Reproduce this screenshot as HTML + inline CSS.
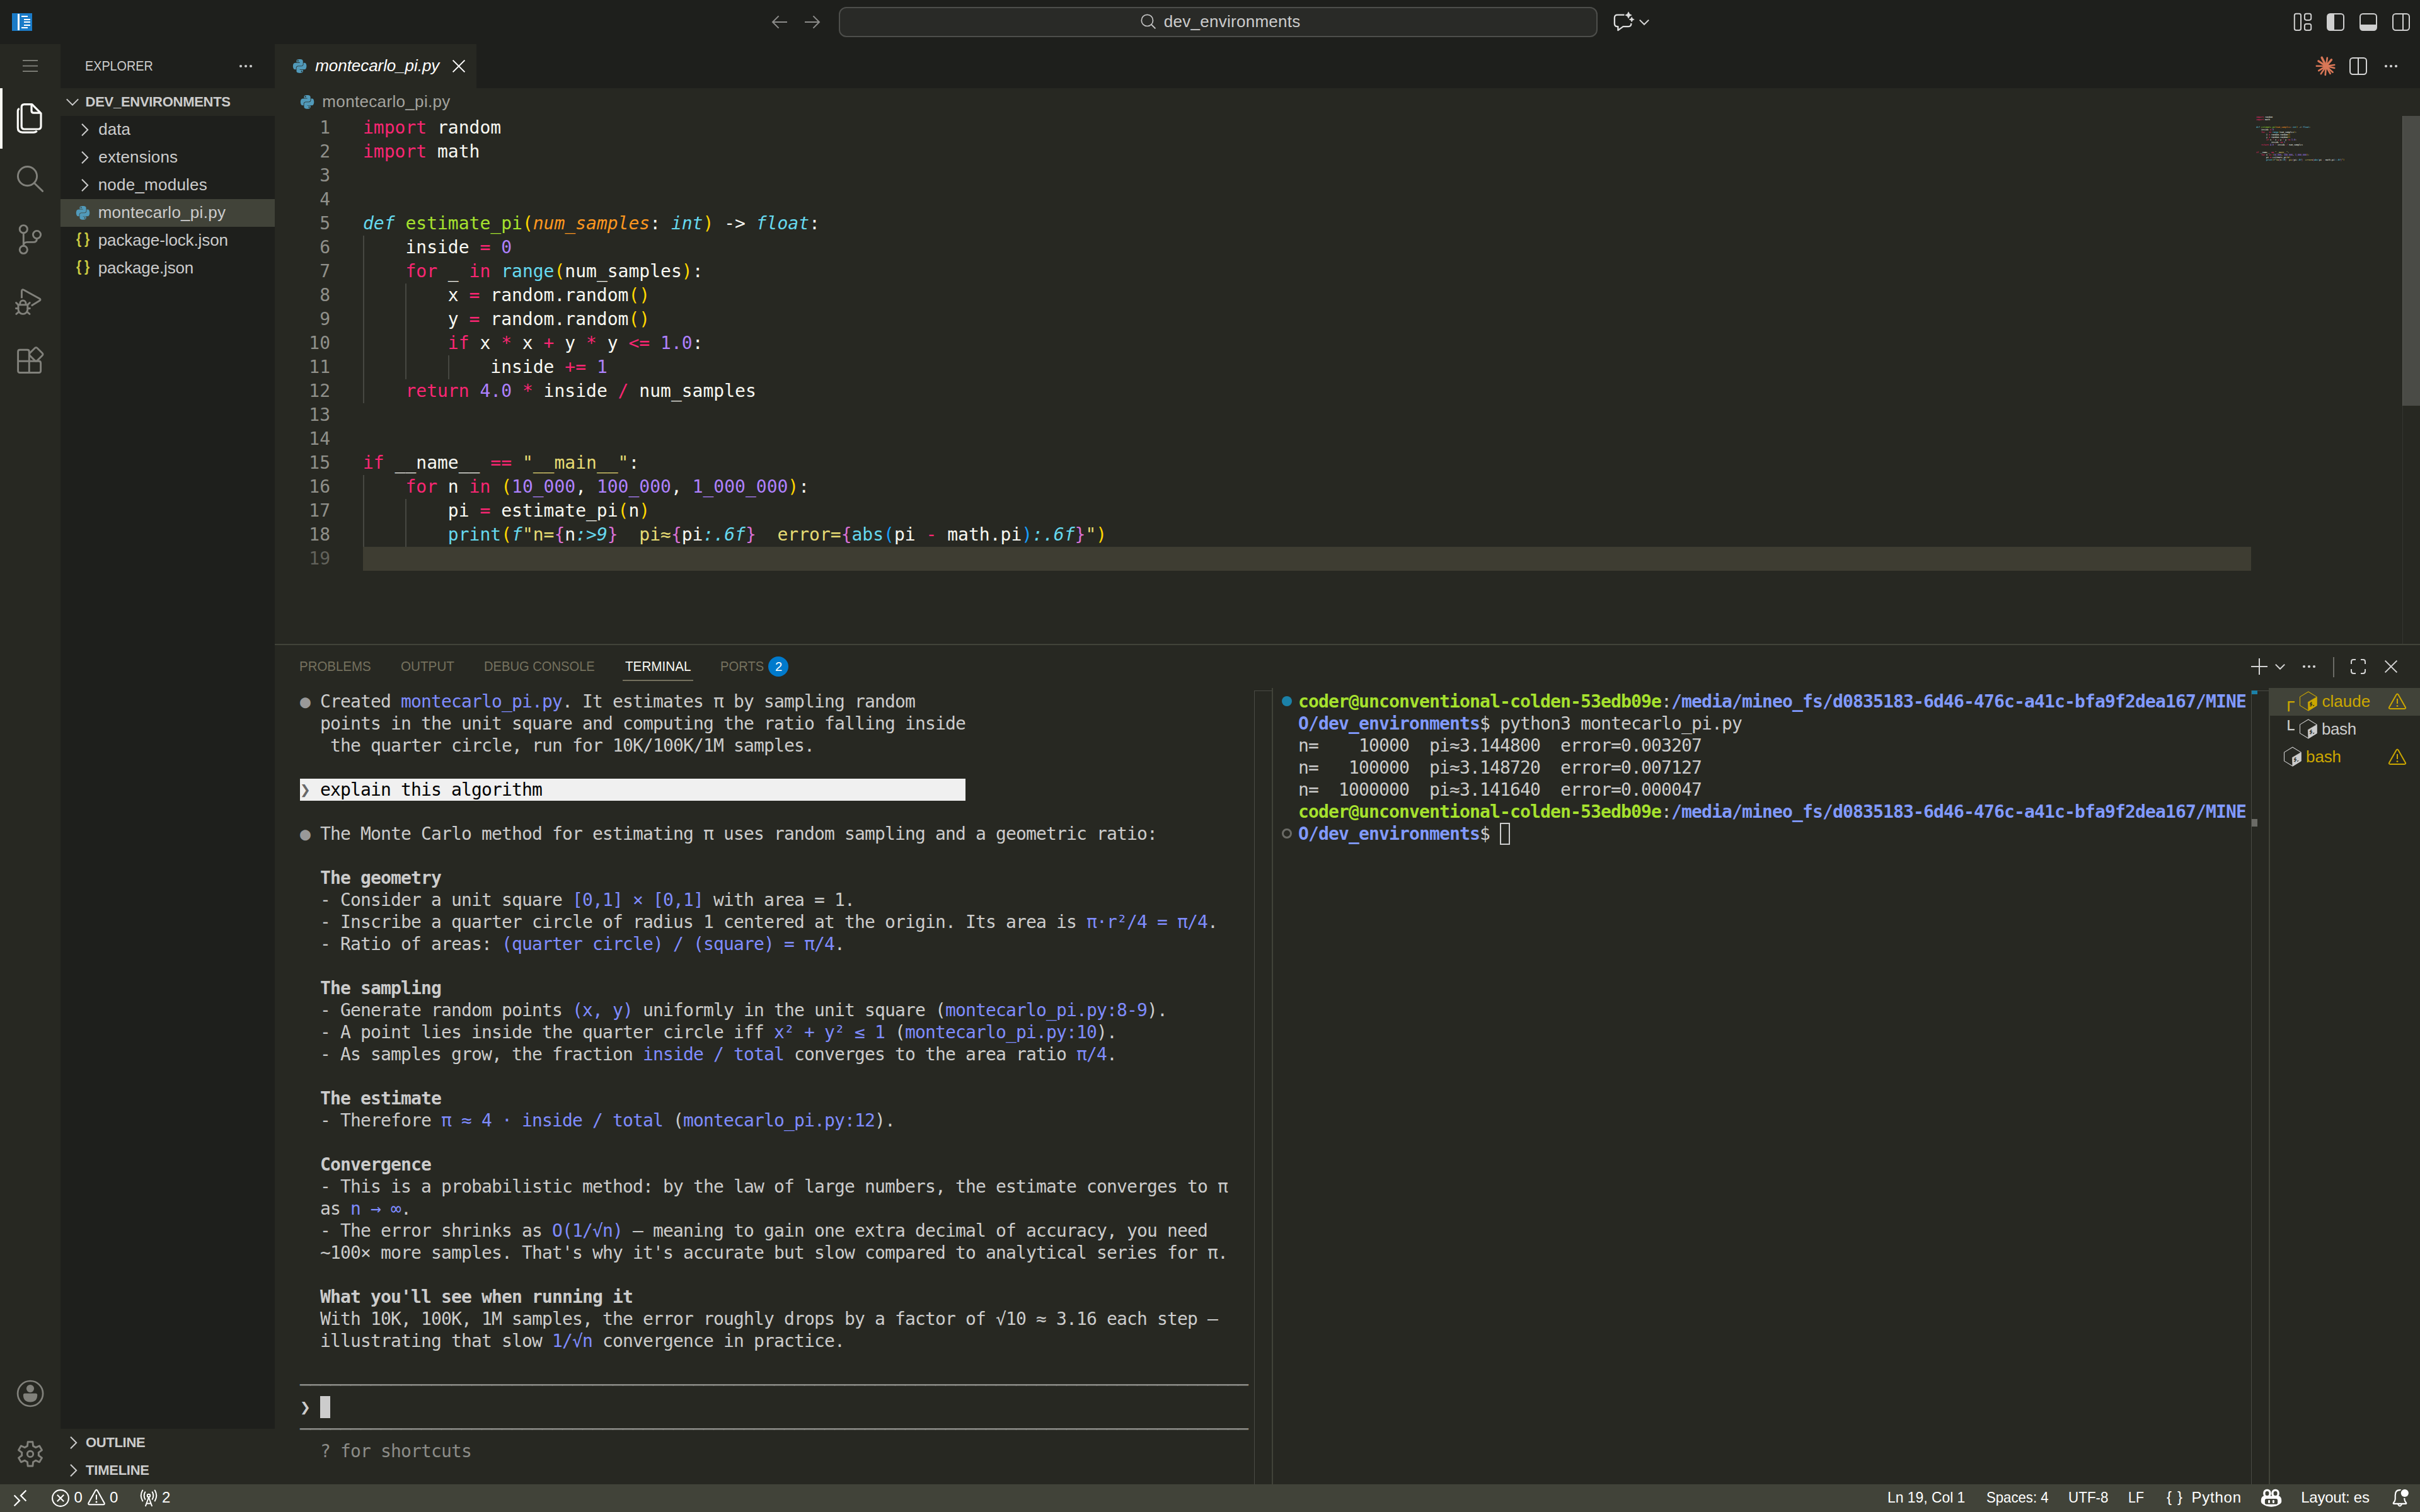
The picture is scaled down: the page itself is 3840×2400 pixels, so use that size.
<!DOCTYPE html>
<html lang="en">
<head>
<meta charset="utf-8">
<title>montecarlo_pi.py - dev_environments - Visual Studio Code</title>
<style>
*{box-sizing:border-box;margin:0;padding:0}
html,body{width:3840px;height:2400px;overflow:hidden;background:#272822}
body{position:relative;font-family:"Liberation Sans", "DejaVu Sans", sans-serif;font-size:26px;color:#cccccc}
.abs{position:absolute}
svg{display:block;overflow:visible}
.t{position:absolute;white-space:pre}
#title{left:0;top:0;width:3840px;height:70px;background:#1e1f1c}
#act{left:0;top:70px;width:96px;height:2286px;background:#272822}
#side{left:96px;top:70px;width:340px;height:2286px;background:#1e1f1c}
.sec{position:absolute;left:96px;width:340px;height:44px;background:#272822}
#tabs{left:436px;top:70px;width:3404px;height:70px;background:#1e1f1c}
#tab{left:436px;top:70px;width:320px;height:70px;background:#272822}
#crumbs{left:436px;top:140px;width:3404px;height:44px;background:#272822}
#editor{left:436px;top:184px;width:3404px;height:838px;background:#272822;overflow:hidden}
#panel{left:436px;top:1022px;width:3404px;height:1334px;background:#272822;border-top:2px solid #414339}
#status{left:0;top:2356px;width:3840px;height:44px;background:#414339}
/* code */
.code{font-family:"DejaVu Sans Mono", "Liberation Mono", monospace;font-size:28px;line-height:38px;color:#f8f8f2}
.cl{height:38px;white-space:pre}
.ln{height:38px;text-align:right;color:#90908a;white-space:pre}
.ln.lncur{color:#62625b}
.k{color:#f92672}.w{color:#f8f8f2}.c{color:#66d9ef}.ci{color:#66d9ef;font-style:italic}
.g{color:#a6e22e}.oi{color:#fd971f;font-style:italic}.p{color:#ae81ff}.s{color:#e6db74}
.b1{color:#ffd700}.b2{color:#da70d6}.b3{color:#179fff}
.ig{position:absolute;width:2px;background:#464741}
/* terminal */
.term{position:absolute;font-family:"DejaVu Sans Mono", "Liberation Mono", monospace;font-size:28px;line-height:35px;letter-spacing:-0.857px;color:#cccccc}
.tr{height:35px;white-space:pre}
.l{color:#7f8cff}.bd{font-weight:bold}.dim{color:#8c8c88}
.dot{color:#999999}
.inv{background:#f0f0f0;color:#000;display:inline-block;height:35px}
.pg{color:#686868}
.pg2{color:#cccccc}
.cur{display:inline-block;width:16px;height:35px;background:#cccccc;vertical-align:top}
.hcur{display:inline-block;width:16px;height:35px;border:2px solid #cccccc;vertical-align:top}
.tg{color:#a6e22e;font-weight:bold}.tb{color:#819aff;font-weight:bold}
.hr{position:absolute;height:2px;background:#8c8c88}
</style>
</head>
<body>

<div id="title" class="abs">
  <div class="abs" style="left:19px;top:21px;width:32px;height:28px;background:#1a7bc8">
    <div class="abs" style="left:9px;top:1px;width:3px;height:26px;background:#fff"></div>
    <div class="abs" style="left:15px;top:4px;width:10px;height:2px;background:#fff"></div>
    <div class="abs" style="left:19px;top:9px;width:10px;height:2px;background:#fff"></div>
    <div class="abs" style="left:19px;top:13px;width:10px;height:2px;background:#fff"></div>
    <div class="abs" style="left:19px;top:18px;width:10px;height:2px;background:#fff"></div>
    <div class="abs" style="left:15px;top:22px;width:10px;height:2px;background:#fff"></div>
  </div>
</div>
<div id="act" class="abs"></div>
<div id="side" class="abs"></div>
<div class="sec" style="top:140px"></div>
<div class="sec" style="top:316px;background:#414339"></div>
<div class="sec" style="top:2268px"></div>
<div class="sec" style="top:2312px"></div>
<div id="tabs" class="abs"></div>
<div id="tab" class="abs"></div>
<div id="crumbs" class="abs"></div>

<!-- ===== editor ===== -->
<div id="editor" class="abs">
  <div class="abs" style="left:140px;top:684px;width:2996px;height:38px;background:#3e3d32"></div>
  <div class="abs code" style="left:0;top:0;width:88px"><div class="ln">1</div>
<div class="ln">2</div>
<div class="ln">3</div>
<div class="ln">4</div>
<div class="ln">5</div>
<div class="ln">6</div>
<div class="ln">7</div>
<div class="ln">8</div>
<div class="ln">9</div>
<div class="ln">10</div>
<div class="ln">11</div>
<div class="ln">12</div>
<div class="ln">13</div>
<div class="ln">14</div>
<div class="ln">15</div>
<div class="ln">16</div>
<div class="ln">17</div>
<div class="ln">18</div>
<div class="ln lncur">19</div></div>
  <div class="abs" style="left:140px;top:0"><div class="ig" style="left:0.0px;top:190px;height:266px"></div><div class="ig" style="left:67.4px;top:266px;height:152px"></div><div class="ig" style="left:134.9px;top:380px;height:38px"></div><div class="ig" style="left:0.0px;top:570px;height:114px"></div><div class="ig" style="left:67.4px;top:608px;height:76px"></div></div>
  <div class="abs code" style="left:140px;top:0">
<div class="cl"><span class="k">import</span><span class="w"> random</span></div>
<div class="cl"><span class="k">import</span><span class="w"> math</span></div>
<div class="cl"></div>
<div class="cl"></div>
<div class="cl"><span class="ci">def</span><span class="w"> </span><span class="g">estimate_pi</span><span class="b1">(</span><span class="oi">num_samples</span><span class="w">: </span><span class="ci">int</span><span class="b1">)</span><span class="w"> -&gt; </span><span class="ci">float</span><span class="w">:</span></div>
<div class="cl"><span class="w">    inside </span><span class="k">=</span><span class="w"> </span><span class="p">0</span></div>
<div class="cl"><span class="w">    </span><span class="k">for</span><span class="w"> _ </span><span class="k">in</span><span class="w"> </span><span class="c">range</span><span class="b1">(</span><span class="w">num_samples</span><span class="b1">)</span><span class="w">:</span></div>
<div class="cl"><span class="w">        x </span><span class="k">=</span><span class="w"> random.random</span><span class="b1">()</span></div>
<div class="cl"><span class="w">        y </span><span class="k">=</span><span class="w"> random.random</span><span class="b1">()</span></div>
<div class="cl"><span class="w">        </span><span class="k">if</span><span class="w"> x </span><span class="k">*</span><span class="w"> x </span><span class="k">+</span><span class="w"> y </span><span class="k">*</span><span class="w"> y </span><span class="k">&lt;=</span><span class="w"> </span><span class="p">1.0</span><span class="w">:</span></div>
<div class="cl"><span class="w">            inside </span><span class="k">+=</span><span class="w"> </span><span class="p">1</span></div>
<div class="cl"><span class="w">    </span><span class="k">return</span><span class="w"> </span><span class="p">4.0</span><span class="w"> </span><span class="k">*</span><span class="w"> inside </span><span class="k">/</span><span class="w"> num_samples</span></div>
<div class="cl"></div>
<div class="cl"></div>
<div class="cl"><span class="k">if</span><span class="w"> __name__ </span><span class="k">==</span><span class="w"> </span><span class="s">"__main__"</span><span class="w">:</span></div>
<div class="cl"><span class="w">    </span><span class="k">for</span><span class="w"> n </span><span class="k">in</span><span class="w"> </span><span class="b1">(</span><span class="p">10_000</span><span class="w">, </span><span class="p">100_000</span><span class="w">, </span><span class="p">1_000_000</span><span class="b1">)</span><span class="w">:</span></div>
<div class="cl"><span class="w">        pi </span><span class="k">=</span><span class="w"> estimate_pi</span><span class="b1">(</span><span class="w">n</span><span class="b1">)</span></div>
<div class="cl"><span class="w">        </span><span class="c">print</span><span class="b1">(</span><span class="ci">f</span><span class="s">"n=</span><span class="b2">{</span><span class="w">n</span><span class="ci">:&gt;9</span><span class="b2">}</span><span class="s">  pi≈</span><span class="b2">{</span><span class="w">pi</span><span class="ci">:.6f</span><span class="b2">}</span><span class="s">  error=</span><span class="b2">{</span><span class="c">abs</span><span class="b3">(</span><span class="w">pi </span><span class="k">-</span><span class="w"> math.pi</span><span class="b3">)</span><span class="ci">:.6f</span><span class="b2">}</span><span class="s">"</span><span class="b1">)</span></div>
<div class="cl"></div>
  </div>
  <div class="abs code" style="left:3144px;top:0;transform-origin:0 0;transform:scale(0.1186,0.10526)">
<div class="cl"><span class="k">import</span><span class="w"> random</span></div>
<div class="cl"><span class="k">import</span><span class="w"> math</span></div>
<div class="cl"></div>
<div class="cl"></div>
<div class="cl"><span class="ci">def</span><span class="w"> </span><span class="g">estimate_pi</span><span class="b1">(</span><span class="oi">num_samples</span><span class="w">: </span><span class="ci">int</span><span class="b1">)</span><span class="w"> -&gt; </span><span class="ci">float</span><span class="w">:</span></div>
<div class="cl"><span class="w">    inside </span><span class="k">=</span><span class="w"> </span><span class="p">0</span></div>
<div class="cl"><span class="w">    </span><span class="k">for</span><span class="w"> _ </span><span class="k">in</span><span class="w"> </span><span class="c">range</span><span class="b1">(</span><span class="w">num_samples</span><span class="b1">)</span><span class="w">:</span></div>
<div class="cl"><span class="w">        x </span><span class="k">=</span><span class="w"> random.random</span><span class="b1">()</span></div>
<div class="cl"><span class="w">        y </span><span class="k">=</span><span class="w"> random.random</span><span class="b1">()</span></div>
<div class="cl"><span class="w">        </span><span class="k">if</span><span class="w"> x </span><span class="k">*</span><span class="w"> x </span><span class="k">+</span><span class="w"> y </span><span class="k">*</span><span class="w"> y </span><span class="k">&lt;=</span><span class="w"> </span><span class="p">1.0</span><span class="w">:</span></div>
<div class="cl"><span class="w">            inside </span><span class="k">+=</span><span class="w"> </span><span class="p">1</span></div>
<div class="cl"><span class="w">    </span><span class="k">return</span><span class="w"> </span><span class="p">4.0</span><span class="w"> </span><span class="k">*</span><span class="w"> inside </span><span class="k">/</span><span class="w"> num_samples</span></div>
<div class="cl"></div>
<div class="cl"></div>
<div class="cl"><span class="k">if</span><span class="w"> __name__ </span><span class="k">==</span><span class="w"> </span><span class="s">"__main__"</span><span class="w">:</span></div>
<div class="cl"><span class="w">    </span><span class="k">for</span><span class="w"> n </span><span class="k">in</span><span class="w"> </span><span class="b1">(</span><span class="p">10_000</span><span class="w">, </span><span class="p">100_000</span><span class="w">, </span><span class="p">1_000_000</span><span class="b1">)</span><span class="w">:</span></div>
<div class="cl"><span class="w">        pi </span><span class="k">=</span><span class="w"> estimate_pi</span><span class="b1">(</span><span class="w">n</span><span class="b1">)</span></div>
<div class="cl"><span class="w">        </span><span class="c">print</span><span class="b1">(</span><span class="ci">f</span><span class="s">"n=</span><span class="b2">{</span><span class="w">n</span><span class="ci">:&gt;9</span><span class="b2">}</span><span class="s">  pi≈</span><span class="b2">{</span><span class="w">pi</span><span class="ci">:.6f</span><span class="b2">}</span><span class="s">  error=</span><span class="b2">{</span><span class="c">abs</span><span class="b3">(</span><span class="w">pi </span><span class="k">-</span><span class="w"> math.pi</span><span class="b3">)</span><span class="ci">:.6f</span><span class="b2">}</span><span class="s">"</span><span class="b1">)</span></div>
<div class="cl"></div>
  </div>
  <div class="abs" style="left:3376px;top:0;width:1px;height:838px;background:#353631"></div>
  <div class="abs" style="left:3376px;top:0;width:28px;height:460px;background:#4a4b46;border-left:1px solid #595a55"></div>
</div>

<!-- ===== panel ===== -->
<div id="panel" class="abs">
  <div class="term" style="left:40px;top:72px">
<div class="tr"><span class="dot">●</span><span class="d"> Created </span><span class="l">montecarlo_pi.py</span><span class="d">. It estimates π by sampling random</span></div>
<div class="tr"><span class="d">  points in the unit square and computing the ratio falling inside</span></div>
<div class="tr"><span class="d">   the quarter circle, run for 10K/100K/1M samples.</span></div>
<div class="tr"></div>
<div class="tr"><span class="inv"><span class="pg">❯</span> explain this algorithm                                          </span></div>
<div class="tr"></div>
<div class="tr"><span class="dot">●</span><span class="d"> The Monte Carlo method for estimating π uses random sampling and a geometric ratio:</span></div>
<div class="tr"></div>
<div class="tr"><span class="bd">  The geometry</span></div>
<div class="tr"><span class="d">  - Consider a unit square </span><span class="l">[0,1] × [0,1]</span><span class="d"> with area = 1.</span></div>
<div class="tr"><span class="d">  - Inscribe a quarter circle of radius 1 centered at the origin. Its area is </span><span class="l">π·r²/4 = π/4</span><span class="d">.</span></div>
<div class="tr"><span class="d">  - Ratio of areas: </span><span class="l">(quarter circle) / (square) = π/4</span><span class="d">.</span></div>
<div class="tr"></div>
<div class="tr"><span class="bd">  The sampling</span></div>
<div class="tr"><span class="d">  - Generate random points </span><span class="l">(x, y)</span><span class="d"> uniformly in the unit square (</span><span class="l">montecarlo_pi.py:8-9</span><span class="d">).</span></div>
<div class="tr"><span class="d">  - A point lies inside the quarter circle iff </span><span class="l">x² + y² ≤ 1</span><span class="d"> (</span><span class="l">montecarlo_pi.py:10</span><span class="d">).</span></div>
<div class="tr"><span class="d">  - As samples grow, the fraction </span><span class="l">inside / total</span><span class="d"> converges to the area ratio </span><span class="l">π/4</span><span class="d">.</span></div>
<div class="tr"></div>
<div class="tr"><span class="bd">  The estimate</span></div>
<div class="tr"><span class="d">  - Therefore </span><span class="l">π ≈ 4 · inside / total</span><span class="d"> (</span><span class="l">montecarlo_pi.py:12</span><span class="d">).</span></div>
<div class="tr"></div>
<div class="tr"><span class="bd">  Convergence</span></div>
<div class="tr"><span class="d">  - This is a probabilistic method: by the law of large numbers, the estimate converges to π</span></div>
<div class="tr"><span class="d">  as </span><span class="l">n → ∞</span><span class="d">.</span></div>
<div class="tr"><span class="d">  - The error shrinks as </span><span class="l">O(1/√n)</span><span class="d"> — meaning to gain one extra decimal of accuracy, you need</span></div>
<div class="tr"><span class="d">  ~100× more samples. That's why it's accurate but slow compared to analytical series for π.</span></div>
<div class="tr"></div>
<div class="tr"><span class="bd">  What you'll see when running it</span></div>
<div class="tr"><span class="d">  With 10K, 100K, 1M samples, the error roughly drops by a factor of √10 ≈ 3.16 each step —</span></div>
<div class="tr"><span class="d">  illustrating that slow </span><span class="l">1/√n</span><span class="d"> convergence in practice.</span></div>
<div class="tr"></div>
<div class="tr"><span class="dim">──────────────────────────────────────────────────────────────────────────────────────────────</span></div>
<div class="tr"><span class="pg2">❯</span><span class="d"> </span><span class="cur">&nbsp;</span></div>
<div class="tr"><span class="dim">──────────────────────────────────────────────────────────────────────────────────────────────</span></div>
<div class="tr"><span class="dim">  ? for shortcuts</span></div>
<div class="tr"></div>
  </div>
  <div class="abs" style="left:1554px;top:72px;width:28px;height:1262px;border-left:1px solid #4a4b45;border-top:1px solid #4a4b45"></div>
  <div class="abs" style="left:1582px;top:68px;width:2px;height:1266px;background:#414339"></div>
  <div class="abs" style="left:1598px;top:81px;width:16px;height:16px;border-radius:8px;background:#1b81a8"></div>
  <div class="abs" style="left:1598px;top:291px;width:16px;height:16px;border-radius:8px;border:3px solid #6b6b66"></div>
  <div class="term" style="left:1624px;top:72px">
<div class="tr"><span class="tg">coder@unconventional-colden-53edb09e</span><span class="d">:</span><span class="tb">/media/mineo_fs/d0835183-6d46-476c-a41c-bfa9f2dea167/MINE</span></div>
<div class="tr"><span class="tb">O/dev_environments</span><span class="d">$ python3 montecarlo_pi.py</span></div>
<div class="tr"><span class="d">n=    10000  pi≈3.144800  error=0.003207</span></div>
<div class="tr"><span class="d">n=   100000  pi≈3.148720  error=0.007127</span></div>
<div class="tr"><span class="d">n=  1000000  pi≈3.141640  error=0.000047</span></div>
<div class="tr"><span class="tg">coder@unconventional-colden-53edb09e</span><span class="d">:</span><span class="tb">/media/mineo_fs/d0835183-6d46-476c-a41c-bfa9f2dea167/MINE</span></div>
<div class="tr"><span class="tb">O/dev_environments</span><span class="d">$ </span><span class="hcur">&nbsp;</span></div>
<div class="tr"></div>
  </div>
  <div class="abs" style="left:3136px;top:72px;width:28px;height:1262px;border-left:1px solid #4a4b45;border-top:1px solid #4a4b45"></div>
  <div class="abs" style="left:3137px;top:72px;width:9px;height:6px;background:#1b81a8"></div>
  <div class="abs" style="left:3137px;top:276px;width:9px;height:12px;background:#6b6b66"></div>
</div>

<div id="status" class="abs"></div>

<!-- ===== overlay: labels + icons (page coordinates) ===== -->
<div class="abs" style="left:1220.5px;top:19px"><svg width="32" height="32" viewBox="0 0 16 16" style="" fill="none"><path d="M14 8 H2.500 M7.300 3.200 L2.500 8 L7.300 12.800" stroke="#8c8c8a" stroke-width="1"/></svg></div>
<div class="abs" style="left:1272.8px;top:19px"><svg width="32" height="32" viewBox="0 0 16 16" style="" fill="none"><path d="M2 8 H13.500 M8.700 3.200 L13.500 8 L8.700 12.800" stroke="#8c8c8a" stroke-width="1"/></svg></div>
<div class="abs" style="left:1331px;top:11px;width:1204px;height:48px;border:2px solid #4d4e4b;border-radius:12px;background:#292a27"></div>
<div class="abs" style="left:1809px;top:21px"><svg width="28" height="28" viewBox="0 0 28 28" style="" fill="none"><circle cx="11.400" cy="11.400" r="9.100" stroke="#c4c4c4" stroke-width="1.700"/><path d="M18 18 L24.400 24.400" stroke="#c4c4c4" stroke-width="1.900"/></svg></div>
<div class="t" style="left:1846.83px;top:19px;font-size:26px;line-height:30px;color:#cccccc;letter-spacing:0.267px;">dev_environments</div>
<div class="abs" style="left:2556px;top:16px"><svg width="40" height="36" viewBox="0 0 40 36" style="" fill="none"><path d="M21.500 7.600 H10.500 Q5.900 7.600 5.900 12.200 V21.500 Q5.900 26.100 10.500 26.100 H11.400 V32.200 L19.600 26.100 H28 Q32.300 26.100 32.300 21.800 V21" stroke="#dedede" stroke-width="2.300" stroke-linejoin="round"/><path d="M28 2.800 L29.700 6.300 L33.200 8 L29.700 9.700 L28 13.200 L26.300 9.700 L22.800 8 L26.300 6.300 Z" fill="#dedede" stroke="#dedede" stroke-width=".6" stroke-linejoin="round"/><path d="M33.200 10.800 L34.500 13.600 L37.300 14.900 L34.500 16.200 L33.200 19 L31.900 16.200 L29.100 14.900 L31.900 13.600 Z" fill="#dedede" stroke="#dedede" stroke-width=".5" stroke-linejoin="round"/></svg></div>
<div class="abs" style="left:2593px;top:19px"><svg width="32" height="32" viewBox="0 0 16 16" style="" fill="none"><path d="M4.400 6.300 L8 9.900 L11.600 6.300" stroke="#d8d8d8" stroke-width="1"/></svg></div>
<div class="abs" style="left:3638px;top:19px"><svg width="32" height="32" viewBox="0 0 16 16" style="" fill="none"><rect x="1.400" y="1.400" width="5.100" height="13.150" rx="1.400" stroke="#cfcfcf"/><rect x="9.450" y="1.400" width="5.150" height="5.050" rx="1.400" stroke="#cfcfcf"/><rect x="9.450" y="9.450" width="5.150" height="5.100" rx="1.400" stroke="#cfcfcf"/></svg></div>
<div class="abs" style="left:3690px;top:19px"><svg width="32" height="32" viewBox="0 0 16 16" style="" fill="none"><rect x="1.500" y="1.500" width="13" height="13" rx="2.200" stroke="#cfcfcf"/><path d="M1.500 3.700 Q1.500 1.500 3.700 1.500 H7 V14.500 H3.700 Q1.500 14.500 1.500 12.300 Z" fill="#cfcfcf"/></svg></div>
<div class="abs" style="left:3742px;top:19px"><svg width="32" height="32" viewBox="0 0 16 16" style="" fill="none"><rect x="1.500" y="1.500" width="13" height="13" rx="2.200" stroke="#cfcfcf"/><path d="M1.500 10 H14.500 V12.300 Q14.500 14.500 12.300 14.500 H3.700 Q1.500 14.500 1.500 12.300 Z" fill="#cfcfcf"/></svg></div>
<div class="abs" style="left:3794px;top:19px"><svg width="32" height="32" viewBox="0 0 16 16" style="" fill="none"><rect x="1.500" y="1.500" width="13" height="13" rx="2.200" stroke="#cfcfcf"/><path d="M9.500 1.500 V14.500" stroke="#cfcfcf"/></svg></div>
<div class="abs" style="left:32px;top:89px"><svg width="32" height="32" viewBox="0 0 16 16" style="" fill="none"><path d="M2 3.600 H14 M2 7.850 H14 M2 12.100 H14" stroke="#85857f" stroke-width=".9"/></svg></div>
<div class="abs" style="left:0;top:140px;width:4px;height:96px;background:#f8f8f2"></div>
<div class="abs" style="left:24px;top:164px"><svg width="48" height="48" viewBox="0 0 24 24" style="" fill="none"><path d="M7.300 0.800 H13.400 L20.500 7.900 V18.300 Q20.500 20.500 18.300 20.500 H7.300 Q5.100 20.500 5.100 18.300 V3 Q5.100 0.800 7.300 0.800 Z" stroke="#fbfbf8" stroke-width="1.6" stroke-linejoin="round"/><path d="M13 0.900 V5.900 Q13 7.600 14.700 7.600 H20.300" stroke="#fbfbf8" stroke-width="1.6"/><path d="M3.400 4.250 Q2.150 4.700 2.150 6.100 V19.400 Q2.150 23.050 5.800 23.050 H14.600 Q16.400 23.050 17.300 21.900" stroke="#fbfbf8" stroke-width="1.6" stroke-linecap="butt"/></svg></div>
<div class="abs" style="left:24px;top:260px"><svg width="48" height="48" viewBox="0 0 24 24" style="" fill="none"><circle cx="9.750" cy="9.800" r="7.550" stroke="#81817b" stroke-width="1.45"/><path d="M15.150 15.250 L21.800 21.700" stroke="#81817b" stroke-width="1.45" stroke-linecap="round"/></svg></div>
<div class="abs" style="left:24px;top:356px"><svg width="48" height="48" viewBox="0 0 24 24" style="" fill="none"><circle cx="6.650" cy="3.850" r="3.050" stroke="#81817b" stroke-width="1.45"/><circle cx="6.650" cy="20.150" r="3.050" stroke="#81817b" stroke-width="1.45"/><circle cx="17.250" cy="8.250" r="3.050" stroke="#81817b" stroke-width="1.45"/><path d="M6.650 6.900 V17.100 M17.250 11.300 V11.500 Q17.250 14.200 14.450 14.200 H9.600 Q6.650 14.200 6.650 17.100" stroke="#81817b" stroke-width="1.45"/></svg></div>
<div class="abs" style="left:24px;top:452px"><svg width="48" height="48" viewBox="0 0 24 24" style="" fill="none"><path d="M5.230 10.660 V5.200 Q5.230 3.300 6.900 4.150 L19.400 11.050 Q20.650 11.820 19.400 12.600 L12.900 16.600" stroke="#81817b" stroke-width="1.45" stroke-linecap="butt" stroke-linejoin="round"/><path d="M2.500 15.950 H9.900 V19.500 A3.700 3.700 0 0 1 2.500 19.500 Z" stroke="#81817b" stroke-width="1.45" stroke-linejoin="round"/><path d="M3.900 15.950 V14.800 A2.300 2.300 0 0 1 8.500 14.800 V15.950" stroke="#81817b" stroke-width="1.45"/><path d="M2.500 18.770 H0.700 M9.900 18.770 H11.700 M2.300 15.700 L0.800 14.300 M10.100 15.700 L11.600 14.300 M2.900 21.600 L0.900 23.200 M9.500 21.600 L11.500 23.200" stroke="#81817b" stroke-width="1.45" stroke-linecap="round"/></svg></div>
<div class="abs" style="left:24px;top:548px"><svg width="48" height="48" viewBox="0 0 24 24" style="" fill="none"><path d="M11.150 12.600 V5.100 Q11.150 3.600 9.650 3.600 H3.800 Q2.300 3.600 2.300 5.100 V20.250 Q2.300 21.750 3.800 21.750 H18.800 Q20.300 21.750 20.300 20.250 V14.100 Q20.300 12.600 18.800 12.600 H2.300 M11.150 12.600 V21.750" stroke="#81817b" stroke-width="1.45" stroke-linejoin="round"/><path d="M15.550 2.350 Q16.600 1.300 17.650 2.350 L21.450 6.150 Q22.500 7.200 21.450 8.250 L17.650 12.050 Q16.600 13.100 15.550 12.050 L11.750 8.250 Q10.700 7.200 11.750 6.150 Z" stroke="#81817b" stroke-width="1.45" stroke-linejoin="round"/></svg></div>
<div class="abs" style="left:24px;top:2188px"><svg width="48" height="48" viewBox="0 0 24 24" style="" fill="none"><circle cx="12.050" cy="12" r="10" stroke="#81817b" stroke-width="1.350"/><circle cx="12" cy="8.050" r="3.050" fill="#81817b"/><path d="M6.450 13.100 Q6.450 11.850 7.700 11.850 H16.350 Q17.600 11.850 17.600 13.100 Q17.600 18.700 12 18.700 Q6.450 18.700 6.450 13.100 Z" fill="#81817b"/></svg></div>
<div class="abs" style="left:24px;top:2284px"><svg width="48" height="48" viewBox="0 0 24 24" style="" fill="none"><path d="M14.29 5.65 L13.94 2.40 L10.06 2.40 L9.71 5.65 A6.70 6.70 0 0 0 7.69 6.82 L4.70 5.49 L2.75 8.86 L5.40 10.79 A6.70 6.70 0 0 0 5.40 13.11 L2.75 15.04 L4.70 18.41 L7.69 17.08 A6.70 6.70 0 0 0 9.71 18.25 L10.06 21.50 L13.94 21.50 L14.29 18.25 A6.70 6.70 0 0 0 16.31 17.08 L19.30 18.41 L21.25 15.04 L18.60 13.11 A6.70 6.70 0 0 0 18.60 10.79 L21.25 8.86 L19.30 5.49 L16.31 6.82 A6.70 6.70 0 0 0 14.29 5.65 Z" stroke="#81817b" stroke-width="1.45" stroke-linejoin="round"/><circle cx="12" cy="11.950" r="2.350" stroke="#81817b" stroke-width="1.45"/></svg></div>
<div class="t" style="left:135.38px;top:92px;font-size:22px;line-height:25px;color:#cccccc;transform:scaleX(0.8991);transform-origin:0 0;">EXPLORER</div>
<div class="abs" style="left:373.7px;top:88.9px"><svg width="32" height="32" viewBox="0 0 16 16" style="" fill="none"><circle cx="4" cy="8" r="1.050" fill="#cccccc"/><circle cx="8" cy="8" r="1.050" fill="#cccccc"/><circle cx="12" cy="8" r="1.050" fill="#cccccc"/></svg></div>
<div class="abs" style="left:99.4px;top:145.7px"><svg width="32" height="32" viewBox="0 0 16 16" style="" fill="none"><path d="M3.400 5.700 L8 10.300 L12.600 5.700" stroke="#cccccc" stroke-width="1.0"/></svg></div>
<div class="t" style="left:135.54px;top:149px;font-size:22px;line-height:25px;color:#cccccc;font-weight:bold;letter-spacing:-0.281px;">DEV_ENVIRONMENTS</div>
<div class="abs" style="left:117.8px;top:190px"><svg width="32" height="32" viewBox="0 0 16 16" style="" fill="none"><path d="M6 3.400 L10.600 8 L6 12.600" stroke="#cccccc" stroke-width="1.0"/></svg></div>
<div class="t" style="left:156.33px;top:190px;font-size:26px;line-height:30px;color:#cccccc;letter-spacing:0.046px;">data</div>
<div class="abs" style="left:117.8px;top:234px"><svg width="32" height="32" viewBox="0 0 16 16" style="" fill="none"><path d="M6 3.400 L10.600 8 L6 12.600" stroke="#cccccc" stroke-width="1.0"/></svg></div>
<div class="t" style="left:156.33px;top:234px;font-size:26px;line-height:30px;color:#cccccc;letter-spacing:0.163px;">extensions</div>
<div class="abs" style="left:117.8px;top:278px"><svg width="32" height="32" viewBox="0 0 16 16" style="" fill="none"><path d="M6 3.400 L10.600 8 L6 12.600" stroke="#cccccc" stroke-width="1.0"/></svg></div>
<div class="t" style="left:155.67px;top:278px;font-size:26px;line-height:30px;color:#cccccc;letter-spacing:0.233px;">node_modules</div>
<div class="abs" style="left:120.9px;top:326.9px"><svg width="21.2" height="21.2" viewBox="2 2 28 28" style="" fill="none"><path fill="#519aba" d="M15.9 2c-1.2 0-2.3.1-3.3.3-2.9.5-3.4 1.600-3.400 3.500V8.400h6.800v1H6.600c-2 0-3.700 1.200-4.300 3.500-.600 2.600-.700 4.300 0 7 .500 2 1.600 3.500 3.600 3.500h2.300v-3.200c0-2.300 2-4.300 4.300-4.300h6.800c1.900 0 3.400-1.600 3.400-3.500V5.800c0-1.800-1.600-3.200-3.400-3.500C18.200 2.100 17 2 15.900 2zm-3.700 2.100c.7 0 1.300.6 1.300 1.300s-.6 1.300-1.300 1.300-1.300-.6-1.300-1.300.6-1.300 1.300-1.300z"/><path fill="#519aba" d="M23.700 9.400v3.100c0 2.400-2 4.400-4.300 4.400h-6.800c-1.900 0-3.400 1.600-3.400 3.500v6.500c0 1.800 1.600 2.900 3.400 3.500 2.200.6 4.200.7 6.800 0 1.700-.5 3.400-1.500 3.400-3.500v-2.600H16v-.9h10.200c2 0 2.700-1.400 3.400-3.500.7-2.100.7-4.200 0-7-.5-2-1.400-3.500-3.400-3.500h-2.500zm-3.800 16.500c.7 0 1.300.6 1.300 1.300s-.6 1.300-1.300 1.300-1.300-.6-1.300-1.300.6-1.300 1.300-1.300z"/></svg></div>
<div class="t" style="left:155.67px;top:322px;font-size:26px;line-height:30px;color:#cccccc;letter-spacing:0.285px;">montecarlo_pi.py</div>
<div class="t" style="left:120.57px;top:366.43px;font-size:23px;line-height:26px;color:#cbcb41;font-weight:bold;transform:scale(0.9101,1.0080);transform-origin:0 0;">{</div>
<div class="t" style="left:134.49px;top:366.43px;font-size:23px;line-height:26px;color:#cbcb41;font-weight:bold;transform:scale(0.9051,1.0080);transform-origin:0 0;">}</div>
<div class="t" style="left:155.72px;top:366px;font-size:26px;line-height:30px;color:#cccccc;letter-spacing:-0.119px;">package-lock.json</div>
<div class="t" style="left:120.57px;top:410.43px;font-size:23px;line-height:26px;color:#cbcb41;font-weight:bold;transform:scale(0.9101,1.0080);transform-origin:0 0;">{</div>
<div class="t" style="left:134.49px;top:410.43px;font-size:23px;line-height:26px;color:#cbcb41;font-weight:bold;transform:scale(0.9051,1.0080);transform-origin:0 0;">}</div>
<div class="t" style="left:155.72px;top:410px;font-size:26px;line-height:30px;color:#cccccc;letter-spacing:-0.146px;">package.json</div>
<div class="abs" style="left:99.5px;top:2274px"><svg width="32" height="32" viewBox="0 0 16 16" style="" fill="none"><path d="M6 3.400 L10.600 8 L6 12.600" stroke="#cccccc" stroke-width="1.0"/></svg></div>
<div class="t" style="left:136.10px;top:2277px;font-size:22px;line-height:25px;color:#cccccc;font-weight:bold;letter-spacing:-0.339px;">OUTLINE</div>
<div class="abs" style="left:99.5px;top:2318px"><svg width="32" height="32" viewBox="0 0 16 16" style="" fill="none"><path d="M6 3.400 L10.600 8 L6 12.600" stroke="#cccccc" stroke-width="1.0"/></svg></div>
<div class="t" style="left:136.09px;top:2321px;font-size:22px;line-height:25px;color:#cccccc;font-weight:bold;letter-spacing:-0.246px;">TIMELINE</div>
<div class="abs" style="left:464.7px;top:93.7px"><svg width="21.3" height="21.3" viewBox="2 2 28 28" style="" fill="none"><path fill="#519aba" d="M15.9 2c-1.2 0-2.3.1-3.3.3-2.9.5-3.4 1.600-3.400 3.500V8.400h6.800v1H6.600c-2 0-3.700 1.200-4.300 3.500-.600 2.600-.700 4.300 0 7 .500 2 1.600 3.500 3.600 3.500h2.300v-3.200c0-2.300 2-4.300 4.300-4.300h6.800c1.900 0 3.400-1.600 3.400-3.500V5.800c0-1.800-1.600-3.200-3.400-3.500C18.200 2.100 17 2 15.900 2zm-3.700 2.100c.7 0 1.300.6 1.300 1.300s-.6 1.300-1.300 1.300-1.300-.6-1.300-1.300.6-1.300 1.300-1.300z"/><path fill="#519aba" d="M23.700 9.400v3.100c0 2.400-2 4.400-4.300 4.400h-6.800c-1.900 0-3.400 1.600-3.400 3.500v6.500c0 1.800 1.600 2.900 3.400 3.500 2.200.6 4.200.7 6.800 0 1.700-.5 3.400-1.500 3.400-3.500v-2.600H16v-.9h10.200c2 0 2.700-1.400 3.400-3.500.7-2.100.7-4.200 0-7-.5-2-1.400-3.500-3.400-3.500h-2.500zm-3.800 16.500c.7 0 1.300.6 1.300 1.300s-.6 1.300-1.300 1.300-1.300-.6-1.300-1.300.6-1.300 1.300-1.300z"/></svg></div>
<div class="t" style="left:500.29px;top:89px;font-size:26px;line-height:30px;color:#ffffff;font-style:italic;letter-spacing:-0.067px;">montecarlo_pi.py</div>
<div class="abs" style="left:712px;top:89px"><svg width="32" height="32" viewBox="0 0 16 16" style="" fill="none"><path d="M3.300 3.300 L12.700 12.700 M12.700 3.300 L3.300 12.700" stroke="#ffffff" stroke-width="1.0"/></svg></div>
<div class="abs" style="left:3670.7px;top:85.1px"><svg width="40" height="40" viewBox="0 0 40 40" style="" fill="none"><path d="M20 20 L13.17 6.36" stroke="#d97757" stroke-width="3.5" stroke-linecap="round"/><path d="M20 20 L21.81 6.77" stroke="#d97757" stroke-width="2.7" stroke-linecap="round"/><path d="M20 20 L28.45 9.79" stroke="#d97757" stroke-width="3.5" stroke-linecap="round"/><path d="M20 20 L33.28 17.90" stroke="#d97757" stroke-width="2.5" stroke-linecap="round"/><path d="M20 20 L33.31 23.02" stroke="#d97757" stroke-width="2.5" stroke-linecap="round"/><path d="M20 20 L30.67 29.74" stroke="#d97757" stroke-width="2.5" stroke-linecap="round"/><path d="M20 20 L26.60 31.72" stroke="#d97757" stroke-width="2.7" stroke-linecap="round"/><path d="M20 20 L18.78 33.90" stroke="#d97757" stroke-width="2.7" stroke-linecap="round"/><path d="M20 20 L11.75 32.23" stroke="#d97757" stroke-width="2.5" stroke-linecap="round"/><path d="M20 20 L8.29 27.20" stroke="#d97757" stroke-width="2.7" stroke-linecap="round"/><path d="M20 20 L4.70 19.73" stroke="#d97757" stroke-width="2.4" stroke-linecap="round"/><path d="M20 20 L7.81 11.96" stroke="#d97757" stroke-width="3.2" stroke-linecap="round"/><circle cx="20" cy="20" r="4.300" fill="#d97757"/></svg></div>
<div class="abs" style="left:3726px;top:89px"><svg width="32" height="32" viewBox="0 0 16 16" style="" fill="none"><rect x="1.500" y="1.500" width="13" height="13" rx="2.200" stroke="#d4d4d4"/><path d="M8 1.500 V14.500" stroke="#d4d4d4"/></svg></div>
<div class="abs" style="left:3778px;top:89px"><svg width="32" height="32" viewBox="0 0 16 16" style="" fill="none"><circle cx="4" cy="8" r="1.050" fill="#d4d4d4"/><circle cx="8" cy="8" r="1.050" fill="#d4d4d4"/><circle cx="12" cy="8" r="1.050" fill="#d4d4d4"/></svg></div>
<div class="abs" style="left:476.8px;top:151.1px"><svg width="21.2" height="21.2" viewBox="2 2 28 28" style="" fill="none"><path fill="#519aba" d="M15.9 2c-1.2 0-2.3.1-3.3.3-2.9.5-3.4 1.600-3.400 3.500V8.400h6.800v1H6.600c-2 0-3.700 1.200-4.300 3.500-.600 2.600-.700 4.300 0 7 .500 2 1.600 3.500 3.600 3.500h2.300v-3.200c0-2.300 2-4.300 4.300-4.300h6.800c1.900 0 3.400-1.600 3.400-3.500V5.800c0-1.800-1.600-3.200-3.400-3.500C18.200 2.100 17 2 15.900 2zm-3.700 2.100c.7 0 1.300.6 1.300 1.300s-.6 1.300-1.300 1.300-1.300-.6-1.300-1.300.6-1.300 1.300-1.300z"/><path fill="#519aba" d="M23.700 9.400v3.100c0 2.400-2 4.400-4.300 4.400h-6.800c-1.900 0-3.400 1.600-3.400 3.500v6.500c0 1.800 1.600 2.900 3.400 3.500 2.200.6 4.200.7 6.800 0 1.700-.5 3.400-1.500 3.400-3.500v-2.600H16v-.9h10.200c2 0 2.700-1.400 3.400-3.500.7-2.100.7-4.200 0-7-.5-2-1.400-3.500-3.400-3.500h-2.500zm-3.800 16.500c.7 0 1.300.6 1.300 1.300s-.6 1.300-1.300 1.300-1.300-.6-1.300-1.300.6-1.300 1.300-1.300z"/></svg></div>
<div class="t" style="left:511.37px;top:146px;font-size:26px;line-height:30px;color:#a3a39e;letter-spacing:0.332px;">montecarlo_pi.py</div>
<div class="t" style="left:475.02px;top:1045px;font-size:22px;line-height:25px;color:#75715e;transform:scaleX(0.9292);transform-origin:0 0;">PROBLEMS</div>
<div class="t" style="left:636.03px;top:1045px;font-size:22px;line-height:25px;color:#75715e;transform:scaleX(0.9392);transform-origin:0 0;">OUTPUT</div>
<div class="t" style="left:768.05px;top:1045px;font-size:22px;line-height:25px;color:#75715e;transform:scaleX(0.9160);transform-origin:0 0;">DEBUG CONSOLE</div>
<div class="t" style="left:991.76px;top:1045px;font-size:22px;line-height:25px;color:#f8f8f2;transform:scaleX(0.9387);transform-origin:0 0;">TERMINAL</div>
<div class="abs" style="left:988px;top:1079px;width:112px;height:2px;background:#75715e"></div>
<div class="t" style="left:1142.94px;top:1045px;font-size:22px;line-height:25px;color:#75715e;transform:scaleX(0.9177);transform-origin:0 0;">PORTS</div>
<div class="abs" style="left:1219px;top:1042px;width:32px;height:32px;border-radius:16px;background:#007acc"></div>
<div class="t" style="left:1229.51px;top:1046.87px;font-size:19px;line-height:21px;color:#ffffff;transform:scale(1.0710,1.0312);transform-origin:0 0;">2</div>
<div class="abs" style="left:3569px;top:1042px"><svg width="32" height="32" viewBox="0 0 16 16" style="" fill="none"><path d="M8 1.500 V14.500 M1.500 8 H14.500" stroke="#d4d4d4" stroke-width="1"/></svg></div>
<div class="abs" style="left:3602px;top:1042px"><svg width="32" height="32" viewBox="0 0 16 16" style="" fill="none"><path d="M4.400 6.300 L8 9.900 L11.600 6.300" stroke="#d4d4d4" stroke-width="1"/></svg></div>
<div class="abs" style="left:3648px;top:1042px"><svg width="32" height="32" viewBox="0 0 16 16" style="" fill="none"><circle cx="4" cy="8" r="1.050" fill="#d4d4d4"/><circle cx="8" cy="8" r="1.050" fill="#d4d4d4"/><circle cx="12" cy="8" r="1.050" fill="#d4d4d4"/></svg></div>
<div class="abs" style="left:3702px;top:1043px;width:2px;height:32px;background:#6b6b66"></div>
<div class="abs" style="left:3726px;top:1042px"><svg width="32" height="32" viewBox="0 0 16 16" style="" fill="none"><path d="M2.500 6 V4.200 Q2.500 2.500 4.200 2.500 H6 M10 2.500 H11.800 Q13.500 2.500 13.500 4.200 V6 M13.500 10 V11.800 Q13.500 13.500 11.800 13.500 H10 M6 13.500 H4.200 Q2.500 13.500 2.500 11.800 V10" stroke="#d4d4d4" stroke-width="1"/></svg></div>
<div class="abs" style="left:3778px;top:1042px"><svg width="32" height="32" viewBox="0 0 16 16" style="" fill="none"><path d="M3.300 3.300 L12.700 12.700 M12.700 3.300 L3.300 12.700" stroke="#d4d4d4" stroke-width="1.0"/></svg></div>
<div class="abs" style="left:3600px;top:1092px;width:2px;height:1264px;background:#414339"></div>
<div class="abs" style="left:3600px;top:1092px;width:240px;height:44px;background:#414339"></div>
<div class="t" style="left:3621.96px;top:1099.65px;font-size:26px;line-height:30px;color:#cca700;font-family:'DejaVu Sans Mono', 'Liberation Mono', monospace;transform:scale(1.1815,0.9786);transform-origin:0 0;">┌</div>
<div class="abs" style="left:3646.5px;top:1097px"><svg width="32" height="32" viewBox="0 0 16 16" style="" fill="none"><path d="M7.900 0.500 L14.550 4.550 V11.450 L7.900 15.500 L1.250 11.450 V4.550 Z" stroke="#cca700" stroke-width=".55" stroke-linejoin="round"/><path d="M7.650 8.700 L14.550 4.650 V11.450 L7.900 15.500 Z" fill="#cca700" stroke="#cca700" stroke-width=".3" stroke-linejoin="round"/><text x="8.600" y="6.700" font-size="4.400" font-family="DejaVu Sans Mono, monospace" font-weight="bold" fill="#272822" transform="matrix(1,-0.55,0,1,0,10.500)">$</text><path d="M11.500 11.700 L12.600 11.100" stroke="#272822" stroke-width=".55"/></svg></div>
<div class="t" style="left:3684.53px;top:1098px;font-size:26px;line-height:30px;color:#cca700;letter-spacing:0.001px;">claude</div>
<div class="abs" style="left:3788px;top:1097.5px"><svg width="32" height="32" viewBox="0 0 16 16" style="" fill="none"><path d="M7.200 2.400 Q8 1.100 8.800 2.400 L14.400 12.200 Q15 13.500 13.600 13.500 H2.400 Q1 13.500 1.600 12.200 Z" stroke="#cca700" stroke-linejoin="round"/><path d="M8 5.500 V9.500" stroke="#cca700"/><circle cx="8" cy="11.300" r=".7" fill="#cca700"/></svg></div>
<div class="t" style="left:3621.96px;top:1143.02px;font-size:26px;line-height:30px;color:#cccccc;font-family:'DejaVu Sans Mono', 'Liberation Mono', monospace;transform:scale(1.1815,0.9816);transform-origin:0 0;">└</div>
<div class="abs" style="left:3646.5px;top:1141.2px"><svg width="32" height="32" viewBox="0 0 16 16" style="" fill="none"><path d="M7.900 0.500 L14.550 4.550 V11.450 L7.900 15.500 L1.250 11.450 V4.550 Z" stroke="#cccccc" stroke-width=".55" stroke-linejoin="round"/><path d="M7.650 8.700 L14.550 4.650 V11.450 L7.900 15.500 Z" fill="#cccccc" stroke="#cccccc" stroke-width=".3" stroke-linejoin="round"/><text x="8.600" y="6.700" font-size="4.400" font-family="DejaVu Sans Mono, monospace" font-weight="bold" fill="#272822" transform="matrix(1,-0.55,0,1,0,10.500)">$</text><path d="M11.500 11.700 L12.600 11.100" stroke="#272822" stroke-width=".55"/></svg></div>
<div class="t" style="left:3683.92px;top:1142px;font-size:26px;line-height:30px;color:#cccccc;letter-spacing:-0.355px;">bash</div>
<div class="abs" style="left:3622.1px;top:1185.1px"><svg width="32" height="32" viewBox="0 0 16 16" style="" fill="none"><path d="M7.900 0.500 L14.550 4.550 V11.450 L7.900 15.500 L1.250 11.450 V4.550 Z" stroke="#cccccc" stroke-width=".55" stroke-linejoin="round"/><path d="M7.650 8.700 L14.550 4.650 V11.450 L7.900 15.500 Z" fill="#cccccc" stroke="#cccccc" stroke-width=".3" stroke-linejoin="round"/><text x="8.600" y="6.700" font-size="4.400" font-family="DejaVu Sans Mono, monospace" font-weight="bold" fill="#272822" transform="matrix(1,-0.55,0,1,0,10.500)">$</text><path d="M11.500 11.700 L12.600 11.100" stroke="#272822" stroke-width=".55"/></svg></div>
<div class="t" style="left:3659.12px;top:1186px;font-size:26px;line-height:30px;color:#cca700;letter-spacing:-0.155px;">bash</div>
<div class="abs" style="left:3788px;top:1185.5px"><svg width="32" height="32" viewBox="0 0 16 16" style="" fill="none"><path d="M7.200 2.400 Q8 1.100 8.800 2.400 L14.400 12.200 Q15 13.500 13.600 13.500 H2.400 Q1 13.500 1.600 12.200 Z" stroke="#cca700" stroke-linejoin="round"/><path d="M8 5.500 V9.500" stroke="#cca700"/><circle cx="8" cy="11.300" r=".7" fill="#cca700"/></svg></div>
<div class="abs" style="left:20.3px;top:2363.8px"><svg width="28" height="32" viewBox="0 0 28 32" style="" fill="none"><path d="M2.600 9.500 L11 17.900 L2.600 26.300" stroke="#ffffff" stroke-width="2.200"/><path d="M21.400 1.700 L13 10.100 L21.400 18.500" stroke="#ffffff" stroke-width="2.200"/></svg></div>
<div class="abs" style="left:80px;top:2362px"><svg width="32" height="32" viewBox="0 0 32 32" style="" fill="none"><circle cx="16" cy="16" r="12.900" stroke="#ffffff" stroke-width="2.100"/><path d="M10.800 10.800 L21.200 21.200 M21.200 10.800 L10.800 21.200" stroke="#ffffff" stroke-width="2.100"/></svg></div>
<div class="t" style="left:117.56px;top:2363px;font-size:24px;line-height:27px;color:#ffffff;letter-spacing:0.016px;">0</div>
<div class="abs" style="left:136.5px;top:2363.3px"><svg width="32" height="32" viewBox="0 0 32 32" style="" fill="none"><path d="M14.300 3.300 Q16 0.500 17.700 3.300 L28.400 22.400 Q29.600 25.200 26.800 25.200 H5.200 Q2.400 25.200 3.600 22.400 Z" stroke="#ffffff" stroke-width="2.100" stroke-linejoin="round"/><path d="M16 9.500 V17.500" stroke="#ffffff" stroke-width="2.100"/><circle cx="16" cy="21" r="1.500" fill="#ffffff"/></svg></div>
<div class="t" style="left:173.96px;top:2363px;font-size:24px;line-height:27px;color:#ffffff;letter-spacing:0.016px;">0</div>
<div class="abs" style="left:219.7px;top:2362.5px"><svg width="32" height="32" viewBox="0 0 32 32" style="" fill="none"><circle cx="16" cy="11" r="2.300" stroke="#ffffff" stroke-width="2"/><path d="M16 13.500 L10.800 28 M16 13.500 L21.200 28 M12.400 23.500 H19.600" stroke="#ffffff" stroke-width="2"/><path d="M10.300 5.300 Q7 11 10.300 16.700 M21.700 5.300 Q25 11 21.700 16.700 M6.300 2.600 Q1.200 11 6.300 19.400 M25.700 2.600 Q30.800 11 25.700 19.400" stroke="#ffffff" stroke-width="2" stroke-linecap="round"/></svg></div>
<div class="t" style="left:257.03px;top:2363px;font-size:24px;line-height:27px;color:#ffffff;letter-spacing:-0.469px;">2</div>
<div class="t" style="left:2995.42px;top:2363px;font-size:24px;line-height:27px;color:#ffffff;transform:scaleX(0.9526);transform-origin:0 0;">Ln 19, Col 1</div>
<div class="t" style="left:3151.70px;top:2363px;font-size:24px;line-height:27px;color:#ffffff;transform:scaleX(0.9233);transform-origin:0 0;">Spaces: 4</div>
<div class="t" style="left:3281.89px;top:2363px;font-size:24px;line-height:27px;color:#ffffff;transform:scaleX(0.9347);transform-origin:0 0;">UTF-8</div>
<div class="t" style="left:3377.34px;top:2363px;font-size:24px;line-height:27px;color:#ffffff;transform:scaleX(0.8915);transform-origin:0 0;">LF</div>
<div class="t" style="left:3437.83px;top:2361.26px;font-size:24px;line-height:27px;color:#ffffff;transform:scale(0.9974,1.0287);transform-origin:0 0;">{</div>
<div class="t" style="left:3455.13px;top:2361.26px;font-size:24px;line-height:27px;color:#ffffff;transform:scale(0.9974,1.0287);transform-origin:0 0;">}</div>
<div class="t" style="left:3477.53px;top:2363px;font-size:24px;line-height:27px;color:#ffffff;letter-spacing:0.759px;">Python</div>
<div class="abs" style="left:3586.8px;top:2363px"><svg width="34" height="30" viewBox="0 0 34 30" style="" fill="none"><path d="M4.500 11.500 Q0.800 13.500 0.800 18 V20.500 Q0.800 22.500 2.500 23.800 Q9 28.700 17 28.700 Q25 28.700 31.500 23.800 Q33.200 22.500 33.200 20.500 V18 Q33.200 13.500 29.500 11.500 Z" fill="#ffffff"/><rect x="5.850" y="2.450" width="9.200" height="10.100" rx="4.200" stroke="#ffffff" stroke-width="3.300" fill="#414339"/><rect x="18.950" y="2.450" width="9.200" height="10.100" rx="4.200" stroke="#ffffff" stroke-width="3.300" fill="#414339"/><rect x="6.900" y="16.100" width="20.200" height="8.700" rx="2.600" fill="#414339"/><rect x="12" y="17.800" width="3" height="5.100" rx="1.500" fill="#ffffff"/><rect x="18.900" y="17.800" width="3" height="5.100" rx="1.500" fill="#ffffff"/></svg></div>
<div class="t" style="left:3651.13px;top:2363px;font-size:24px;line-height:27px;color:#ffffff;letter-spacing:-0.217px;">Layout: es</div>
<div class="abs" style="left:3793.2px;top:2363px"><svg width="32" height="32" viewBox="0 0 32 32" style="" fill="none"><path d="M15 2.100 Q7.700 2.100 7.700 10.500 V16.500 Q7.700 19 5 22.400 Q4.100 23.900 5.700 23.900 H24.300 Q25.900 23.900 25 22.400 Q22.300 19 22.300 16.500 V10.500 Q22.300 2.100 15 2.100 Z" stroke="#ffffff" stroke-width="2.100" stroke-linejoin="round"/><path d="M11.900 24.600 Q15 30.400 18.100 24.600" stroke="#ffffff" stroke-width="2"/><circle cx="22.800" cy="7" r="8" fill="#414339"/><circle cx="22.800" cy="7" r="6.100" fill="#ffffff"/></svg></div>

</body>
</html>
